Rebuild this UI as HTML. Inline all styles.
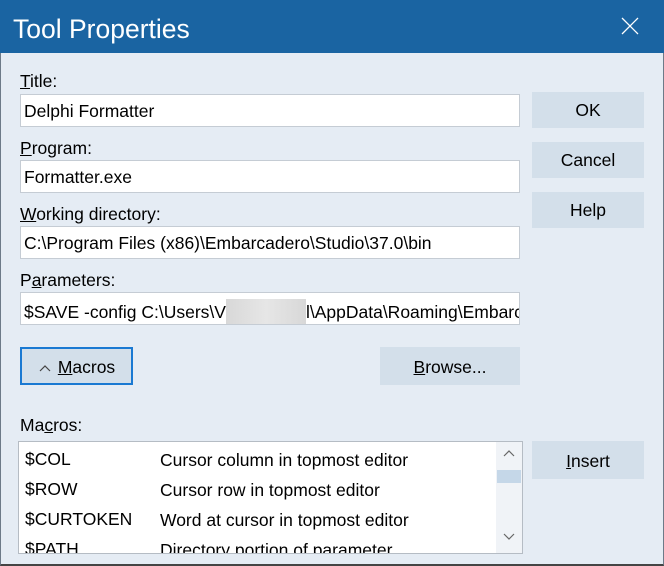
<!DOCTYPE html>
<html><head><style>
*{margin:0;padding:0;box-sizing:border-box}
body{width:664px;height:566px;overflow:hidden;background:#e5ecf4;font-family:"Liberation Sans",sans-serif;font-size:17.5px;color:#000;position:relative}
.frame{position:absolute;left:0;top:0;width:664px;height:566px;border:1px solid #6d7a88;border-bottom:2px solid #444}
.tb{position:absolute;left:0;top:0;width:664px;height:53px;background:#1a64a2;color:#fff}
.tb .t{position:absolute;left:13px;top:14px;font-size:26.5px}
.x{position:absolute;left:620px;top:16px}
.a{position:absolute;white-space:nowrap}
.in{position:absolute;left:20px;width:500px;height:33px;background:#fff;border:1px solid #c5ccd4;padding:6px 0 0 3px;white-space:nowrap;overflow:hidden}
.btn{position:absolute;background:#d3dfea;text-align:center;line-height:36px}
u{text-decoration:underline}
</style></head><body>
<div class="frame"></div>
<div class="tb"><div class="t">Tool Properties</div>
<svg class="x" width="20" height="20"><path d="M2 2L18 18M18 2L2 18" stroke="#fff" stroke-width="1.3"/></svg></div>
<div class="a" style="left:20px;top:71px"><u>T</u>itle:</div>
<div class="in" style="top:94px">Delphi Formatter</div>
<div class="a" style="left:20px;top:138px"><u>P</u>rogram:</div>
<div class="in" style="top:160px">Formatter.exe</div>
<div class="a" style="left:20px;top:204px"><u>W</u>orking directory:</div>
<div class="in" style="top:226px">C:\Program Files (x86)\Embarcadero\Studio\37.0\bin</div>
<div class="a" style="left:20px;top:270px">P<u>a</u>rameters:</div>
<div class="in" style="top:292px">$SAVE -config C:\Users\V<span style="display:inline-block;width:80px;height:26px;vertical-align:-7px;background:linear-gradient(90deg,#d8d8d8,#e6e6e6,#d8d8d8)"></span>l\AppData\Roaming\Embarcadero</div>
<div class="btn" style="left:532px;top:92px;width:112px;height:36px">OK</div>
<div class="btn" style="left:532px;top:142px;width:112px;height:36px">Cancel</div>
<div class="btn" style="left:532px;top:192px;width:112px;height:36px">Help</div>
<div class="btn" style="left:20px;top:347px;width:113px;height:38px;border:2px solid #1a79d2;line-height:36px"><svg width="14" height="10" style="margin-right:6px"><path d="M2 8L7 3L12 8" stroke="#444" fill="none" stroke-width="1.2"/></svg><u>M</u>acros</div>
<div class="btn" style="left:380px;top:347px;width:140px;height:38px;line-height:40px"><u>B</u>rowse...</div>
<div class="a" style="left:20px;top:415px">Ma<u>c</u>ros:</div>
<div style="position:absolute;left:18px;top:441px;width:505px;height:113px;background:#fff;border:1px solid #b5bcc4;overflow:hidden">
<div style="position:absolute;right:0;top:0;width:26px;height:111px;background:#f0f3f7"></div>
<div style="position:absolute;right:1px;top:28px;width:24px;height:13px;background:#c5d7e8"></div>
<svg style="position:absolute;right:6px;top:6px" width="14" height="10"><path d="M2 8L7 3L12 8" stroke="#666" fill="none" stroke-width="1.2"/></svg>
<svg style="position:absolute;right:6px;top:90px" width="14" height="10"><path d="M2 2L7 7L12 2" stroke="#666" fill="none" stroke-width="1.2"/></svg>
<div class="a" style="left:6px;top:7px">$COL</div><div class="a" style="left:141px;top:8px">Cursor column in topmost editor</div>
<div class="a" style="left:6px;top:37px">$ROW</div><div class="a" style="left:141px;top:38px">Cursor row in topmost editor</div>
<div class="a" style="left:6px;top:67px">$CURTOKEN</div><div class="a" style="left:141px;top:68px">Word at cursor in topmost editor</div>
<div class="a" style="left:6px;top:97px">$PATH</div><div class="a" style="left:141px;top:98px">Directory portion of parameter</div>
</div>
<div class="btn" style="left:532px;top:441px;width:112px;height:38px;line-height:40px"><u>I</u>nsert</div>
</body></html>
